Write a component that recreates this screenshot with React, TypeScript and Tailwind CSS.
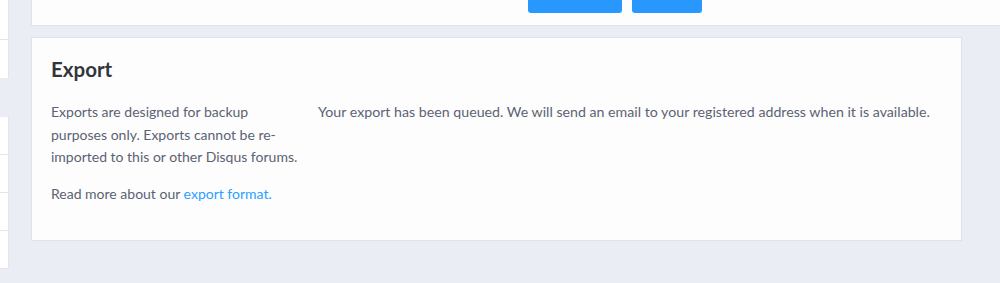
export default function App() {
  return (
    <div className="relative h-[283px] w-[1000px] overflow-hidden bg-[#ebedf4] font-['Lato',sans-serif]">
      {/* sidebar remnant */}
      <div className="absolute left-0 top-0 w-[9px]">
        <div className="h-[40px] border-b border-r border-[#e3e5ec] bg-white" />
        <div className="h-[38px] border-r border-[#e3e5ec] bg-white" />
        <div className="h-[39px]" />
        <div className="h-[38px] border-b border-r border-[#e3e5ec] bg-white" />
        <div className="h-[38px] border-b border-r border-[#e3e5ec] bg-white" />
        <div className="h-[38px] border-b border-r border-[#e3e5ec] bg-white" />
        <div className="h-[38px] border-b border-r border-[#e3e5ec] bg-white" />
      </div>

      <div className="ml-[31px] flex flex-col">
        {/* previous card */}
        <div className="flex h-[26px] w-[980px] border-b border-l border-[#e0e2ea] bg-[#fdfdfe] pl-[496px]">
          <div className="h-[13px] w-[94px] rounded-b-[3px] bg-[#2898ff]" />
          <div className="ml-[10px] h-[13px] w-[70px] rounded-b-[3px] bg-[#2898ff]" />
        </div>

        {/* export card */}
        <div className="mt-[11px] h-[204px] w-[931px] border border-[#e0e2ea] bg-[#fdfdfe] px-[19px] pt-[17px]">
          <h2 className="text-[20.5px] font-bold leading-[28px] text-[#32363c]">Export</h2>
          <div className="mt-[18px] flex">
            <div className="mr-[17px] w-[250px] shrink-0 text-[14px] leading-[22.5px] text-[#5b6372]">
              <p>
                Exports are designed for backup purposes only. Exports cannot be re-imported to this or other Disqus
                forums.
              </p>
              <p className="mt-[14px]">
                Read more about our <a className="text-[#2e9fff]">export format.</a>
              </p>
            </div>
            <p className="whitespace-nowrap text-[14.2px] leading-[22.5px] text-[#5b6372]">
              Your export has been queued. We will send an email to your registered address when it is available.
            </p>
          </div>
        </div>
      </div>
    </div>
  );
}
